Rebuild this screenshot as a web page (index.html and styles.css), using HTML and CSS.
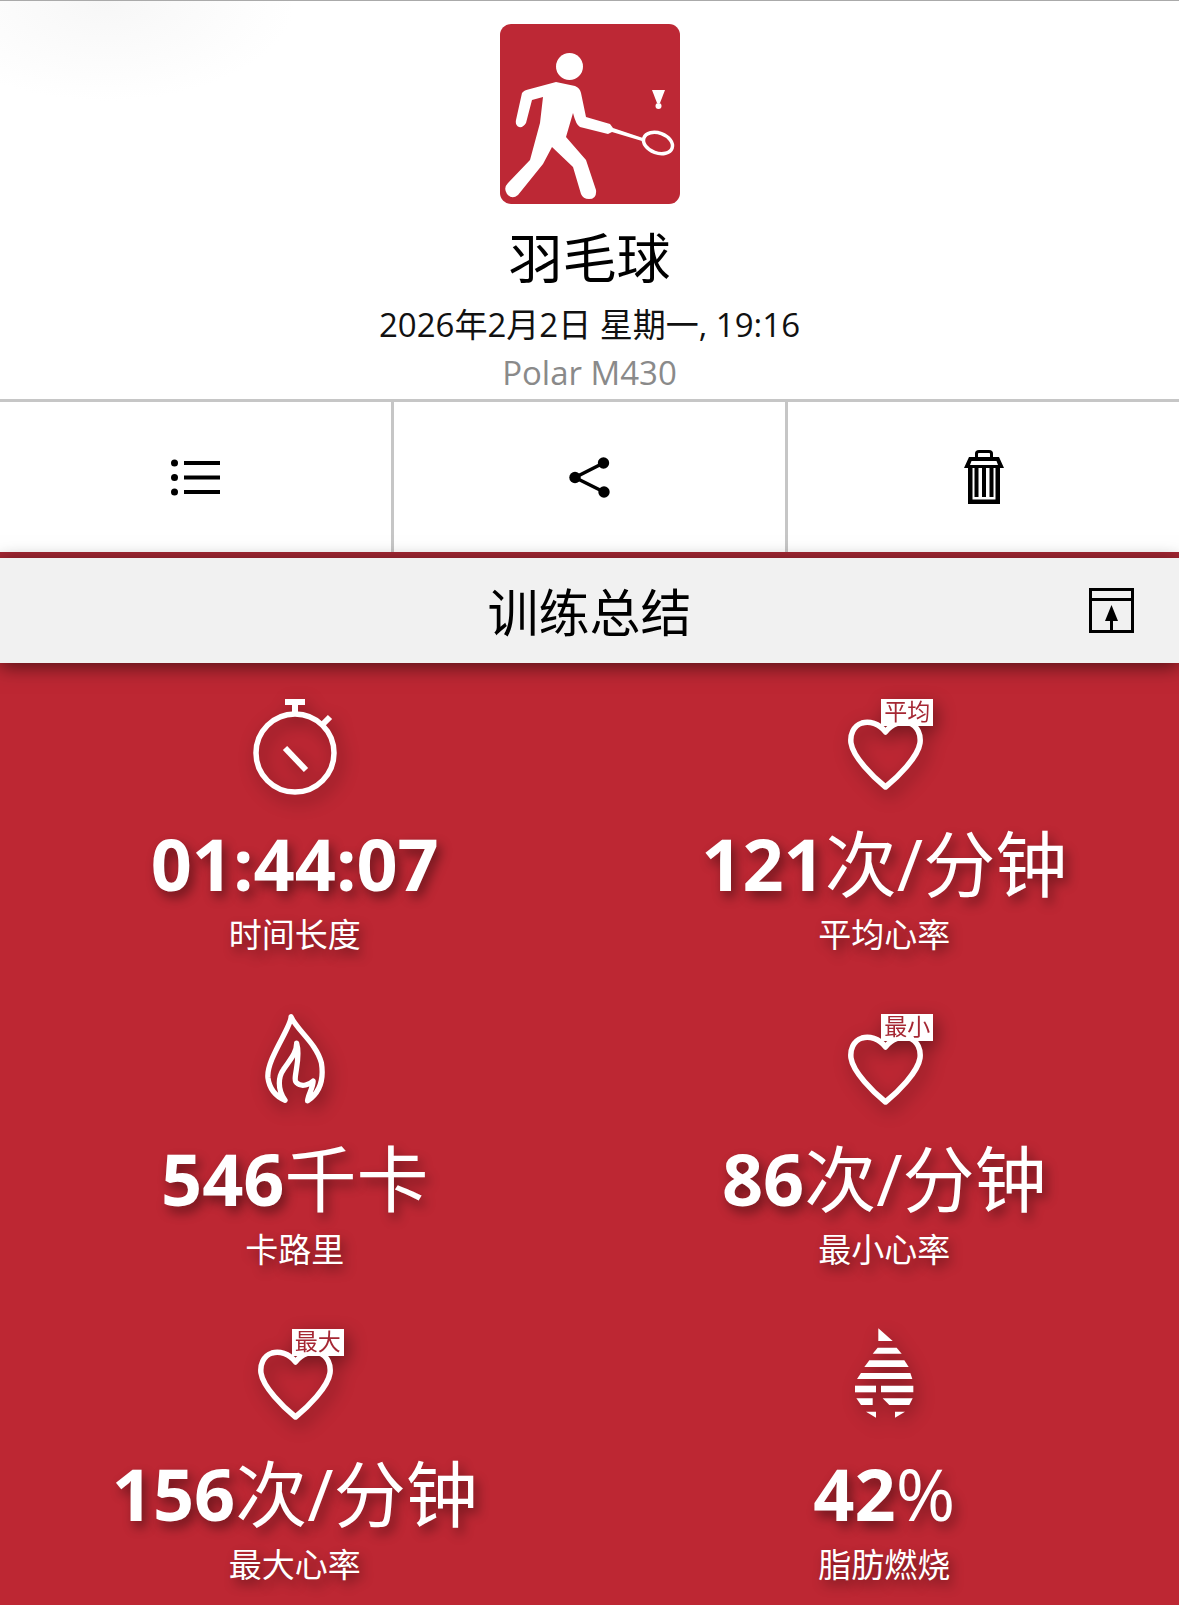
FILE: index.html
```html
<!DOCTYPE html>
<html lang="zh">
<head>
  <meta charset="UTF-8">
  <title>羽毛球</title>
  <link rel="stylesheet" href="styles.css">
</head>
<body>
<div class="top">
  <svg class="sport-logo" viewBox="0 0 180 180">
    <rect width="180" height="180" rx="11" fill="#bd2835"/>
    <g fill="#fff">
      <circle cx="69.5" cy="42.5" r="13.5"/>
      <path d="M22 69 Q24 66 30 65 L56 58 L75 62 Q80 64 81 69 L86 93 L110 100 L113 104 L143 114 L142 117 L112 108 L108 110 L80 103 Q76 101 73 89 L66 113 L86 136 L96 166 Q97 175 89 175 Q83 175 81 170 L73 143 L52 123 L43 140 L18 171 Q12 176 7 170 Q3 164 8 159 L30 136 L40 99 L43 73 L32 76 L26 99 Q23 104 19 103 Q15 101 16 96 Z"/>
      <path d="M152 66 H165 L160 79 H157 Z"/>
      <circle cx="158.5" cy="82" r="3"/>
    </g>
    <ellipse cx="158" cy="119" rx="15" ry="10" transform="rotate(20 158 119)" fill="none" stroke="#fff" stroke-width="3.5"/>
  </svg>
  <h1 class="sport-name">羽毛球</h1>
  <div class="sport-date">2026年2月2日 星期一, 19:16</div>
  <div class="sport-device">Polar M430</div>
</div>

<div class="actions">
  <div class="action">
    <svg class="ico-list" viewBox="0 0 49 37">
      <circle cx="3.5" cy="4" r="3.5"/><circle cx="3.5" cy="18.5" r="3.5"/><circle cx="3.5" cy="33" r="3.5"/>
      <rect x="13" y="2" width="36" height="4"/><rect x="13" y="16.5" width="36" height="4"/><rect x="13" y="31" width="36" height="4"/>
    </svg>
  </div>
  <div class="action">
    <svg class="ico-share" viewBox="0 0 41 41">
      <path d="M34.5 6 L6 20.5 L35 35" fill="none" stroke="#000" stroke-width="3.5"/>
      <circle cx="34.5" cy="6" r="5.7"/><circle cx="6" cy="20.5" r="5.7"/><circle cx="35" cy="35" r="5.7"/>
    </svg>
  </div>
  <div class="action">
    <svg class="ico-trash" viewBox="0 0 40 54">
      <path d="M12.5 7 V3.5 Q12.5 1.5 15 1.5 H25 Q27.5 1.5 27.5 3.5 V7" fill="none" stroke="#000" stroke-width="3"/>
      <path d="M5 7 H35 L40 18 H36 V54 H4 V18 H0 Z M7.5 11 L6 15 H34 L32.5 11 Z M8.5 18 V49.5 H31.5 V18 Z" fill-rule="evenodd"/>
      <rect x="10.5" y="18" width="4" height="29"/><rect x="18" y="18" width="4" height="29"/><rect x="25.5" y="18" width="4" height="29"/>
    </svg>
  </div>
</div>

<div class="summary-head">
  <h2 class="summary-title">训练总结</h2>
  <svg class="ico-collapse" viewBox="0 0 45 45">
    <rect x="1.5" y="1.5" width="42" height="42" fill="none" stroke="#000" stroke-width="3"/>
    <path d="M1.5 11.5 H43.5" stroke="#000" stroke-width="3"/>
    <path d="M22.5 17 L29 33 H24 V43 H21 V33 H16 Z"/>
  </svg>
</div>

<div class="summary">
  <div class="stat">
    <div class="stat-icon">
      <svg class="ico-watch" viewBox="0 0 90 96">
        <g fill="none" stroke="#fff">
          <circle cx="42" cy="54" r="39" stroke-width="5.5"/>
          <path d="M42 6 V15" stroke-width="6"/>
          <path d="M32 3 H52" stroke-width="6"/>
          <path d="M68 27 L77 18" stroke-width="6"/>
          <path d="M32 49 L53 71" stroke-width="6"/>
        </g>
      </svg>
    </div>
    <div class="stat-value">01:44:07</div>
    <div class="stat-label">时间长度</div>
  </div>

  <div class="stat">
    <div class="stat-icon heart-icon">
      <svg class="ico-heart" viewBox="0 0 75 71"><path d="M37.5 13 C31 4 21 2 14 4 C5 7 2 16 3 24 C5 38 25 58 37.5 68 C50 58 70 38 72 24 C73 16 70 7 61 4 C54 2 44 4 37.5 13 Z" fill="none" stroke="#fff" stroke-width="5.5" stroke-linejoin="round"/></svg>
      <span class="heart-tag">平均</span>
    </div>
    <div class="stat-value">121<span class="unit">次/分钟</span></div>
    <div class="stat-label">平均心率</div>
  </div>

  <div class="stat">
    <div class="stat-icon">
      <svg class="ico-flame" viewBox="60 30 200 290">
        <path d="M198 305 C235 280 248 240 240 190 C225 130 165 90 148 50 C150 80 72 180 78 235 C82 265 100 290 130 303 C105 270 110 230 125 210 C145 180 165 160 165 130 C180 180 150 240 165 250 C180 265 205 255 215 245 C215 265 200 285 198 305 Z" fill="none" stroke="#fff" stroke-width="16" stroke-linejoin="round"/>
      </svg>
    </div>
    <div class="stat-value">546<span class="unit">千卡</span></div>
    <div class="stat-label">卡路里</div>
  </div>

  <div class="stat">
    <div class="stat-icon heart-icon">
      <svg class="ico-heart" viewBox="0 0 75 71"><path d="M37.5 13 C31 4 21 2 14 4 C5 7 2 16 3 24 C5 38 25 58 37.5 68 C50 58 70 38 72 24 C73 16 70 7 61 4 C54 2 44 4 37.5 13 Z" fill="none" stroke="#fff" stroke-width="5.5" stroke-linejoin="round"/></svg>
      <span class="heart-tag">最小</span>
    </div>
    <div class="stat-value">86<span class="unit">次/分钟</span></div>
    <div class="stat-label">最小心率</div>
  </div>

  <div class="stat">
    <div class="stat-icon heart-icon">
      <svg class="ico-heart" viewBox="0 0 75 71"><path d="M37.5 13 C31 4 21 2 14 4 C5 7 2 16 3 24 C5 38 25 58 37.5 68 C50 58 70 38 72 24 C73 16 70 7 61 4 C54 2 44 4 37.5 13 Z" fill="none" stroke="#fff" stroke-width="5.5" stroke-linejoin="round"/></svg>
      <span class="heart-tag">最大</span>
    </div>
    <div class="stat-value">156<span class="unit">次/分钟</span></div>
    <div class="stat-label">最大心率</div>
  </div>

  <div class="stat">
    <div class="stat-icon">
      <svg class="ico-drop" viewBox="66 38 186 276">
        <g fill="#fff">
          <path d="M142 42 L185 80 H142 Z"/>
          <path d="M140 100 H197 L212 118 H125 Z"/>
          <path d="M115 138 H220 L233 158 H100 Z"/>
          <path d="M90 176 H238 L244 194 H78 Z"/>
          <path d="M72 214 H135 V234 H72 Z"/>
          <path d="M150 214 H247 V234 H150 Z"/>
          <path d="M76 252 H125 V272 H90 Z"/>
          <path d="M155 252 H245 L235 272 H175 Z"/>
          <path d="M105 292 L135 292 V310 Z"/>
          <path d="M192 292 H222 L192 310 Z"/>
        </g>
      </svg>
    </div>
    <div class="stat-value">42<span class="unit">%</span></div>
    <div class="stat-label">脂肪燃烧</div>
  </div>
</div>
</body>
</html>
```

FILE: styles.css
```css
* {
  padding: 0;
  margin: 0;
  box-sizing: border-box;
}

html, body {
  height: 1605px;
  overflow: hidden;
}

body {
  background: #fff;
  color: #000;
  font-family: "Open Sans", "Noto Sans CJK SC", sans-serif;
}

svg {
  display: block;
}

.top {
  height: 399px;
  padding-top: 24px;
  border-top: 1px solid #aaa;
  background: radial-gradient(ellipse 190px 100px at 105px 0, #f7f7f7, #fff);
  display: flex;
  flex-direction: column;
  align-items: center;
}

.sport-logo {
  width: 180px;
  height: 180px;
  margin-top: -1px;
}

.sport-name {
  margin-top: 21px;
  font-size: 54px;
  line-height: 66px;
  font-weight: 400;
}

.sport-date {
  margin-top: 11px;
  font-size: 33px;
  line-height: 46px;
  color: #111;
}

.sport-device {
  margin-top: 2px;
  font-size: 33px;
  line-height: 46px;
  color: #8a8a8a;
  white-space: nowrap;
}

.actions {
  display: grid;
  grid-template-columns: repeat(3, 1fr);
  gap: 3px;
  height: 159px;
  background: #c6c6c6;
  border-top: 3px solid #c6c6c6;
  border-bottom: 6px solid #a52733;
}

.action {
  display: flex;
  align-items: center;
  justify-content: center;
  background: #fff;
}

.ico-list {
  width: 49px;
  height: 37px;
}

.ico-share {
  width: 41px;
  height: 41px;
}

.ico-trash {
  width: 40px;
  height: 54px;
}

.summary-head {
  position: relative;
  z-index: 1;
  height: 105px;
  background: #f1f1f1;
  display: flex;
  align-items: center;
  justify-content: center;
  box-shadow: 0 4px 18px rgba(0, 0, 0, 0.55);
}

.summary-title {
  margin-top: 3px;
  font-size: 51px;
  font-weight: 400;
  line-height: 1;
}

.ico-collapse {
  position: absolute;
  right: 45px;
  top: 30px;
  width: 45px;
  height: 45px;
}

.summary {
  display: grid;
  grid-template-columns: 1fr 1fr;
  grid-auto-rows: 315px;
  background: #bd2733;
  color: #fff;
}

.stat {
  display: flex;
  flex-direction: column;
  align-items: center;
  padding-top: 36px;
  text-shadow: 4px 6px 12px rgba(0, 0, 0, 0.45);
}

.stat-icon {
  position: relative;
  height: 96px;
  width: 100px;
  display: flex;
  align-items: center;
  justify-content: center;
  filter: drop-shadow(4px 6px 9px rgba(0, 0, 0, 0.4));
}

.stat-value {
  margin-top: 23px;
  font-size: 72px;
  line-height: 90px;
  font-weight: 700;
  white-space: nowrap;
}

.unit {
  font-weight: 400;
}

.stat-label {
  margin-top: 5px;
  font-size: 33px;
  line-height: 44px;
}

.ico-watch {
  width: 90px;
  height: 96px;
  margin-left: 6px;
}

.ico-heart {
  width: 75px;
  height: 71px;
  margin-top: 14px;
  margin-left: 2px;
}

.heart-tag {
  position: absolute;
  left: 47px;
  top: 0;
  width: 52px;
  height: 27px;
  background: #fff;
  color: #a52733;
  font-size: 23px;
  font-weight: 400;
  line-height: 25px;
  text-align: center;
  text-shadow: none;
  white-space: nowrap;
}

.ico-flame {
  width: 66px;
  height: 96px;
  margin-top: -8px;
}

.ico-drop {
  width: 62px;
  height: 92px;
  margin-top: -8px;
}
```
